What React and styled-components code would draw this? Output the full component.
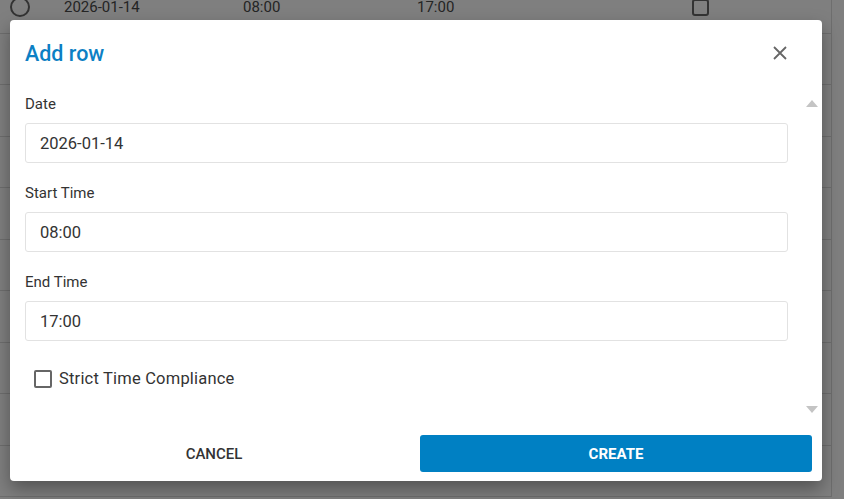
import React from "react";
import styled, { createGlobalStyle } from "styled-components";

const GlobalStyle = createGlobalStyle`
  html, body {
    margin: 0;
    padding: 0;
    background: #fff;
    font-family: Roboto, "Liberation Sans", sans-serif;
    overflow: hidden;
  }
  * { box-sizing: border-box; }
`;

const rows = [
  { date: "2026-01-14", start: "08:00", end: "17:00" },
  {}, {}, {}, {}, {}, {}, {}, {}, {},
];

const App = () => {
  return (
    <Page>
      <GlobalStyle />
      <Table>
        {rows.map((r, i) => (
          <Row key={i}>
            <Cell $w={64}>{r.date && <Radio />}</Cell>
            <Cell $w={179}>{r.date}</Cell>
            <Cell $w={174}>{r.start}</Cell>
            <Cell $w={274}>{r.end}</Cell>
            <Cell $w={141}>{r.date && <Box />}</Cell>
          </Row>
        ))}
      </Table>

      <Overlay>
        <Dialog>
          <Header>
            <Title>Add row</Title>
            <CloseBtn aria-label="close">
              <svg width="14" height="14" viewBox="0 0 14 14">
                <path d="M1 1 L13 13 M13 1 L1 13" stroke="#666" strokeWidth="1.8" />
              </svg>
            </CloseBtn>
          </Header>

          <Body>
            <Content>
              <Field>
                <Label>Date</Label>
                <Input>2026-01-14</Input>
              </Field>
              <Field>
                <Label>Start Time</Label>
                <Input>08:00</Input>
              </Field>
              <Field>
                <Label>End Time</Label>
                <Input>17:00</Input>
              </Field>
              <CheckRow>
                <CheckBox />
                <span>Strict Time Compliance</span>
              </CheckRow>
            </Content>
            <ScrollTrack>
              <Arrow />
              <Arrow $down />
            </ScrollTrack>
          </Body>

          <Footer>
            <TextButton>Cancel</TextButton>
            <PrimaryButton>Create</PrimaryButton>
          </Footer>
        </Dialog>
      </Overlay>
    </Page>
  );
};
export default App;

const Page = styled.div`
  position: relative;
  width: 844px;
  height: 499px;
  overflow: hidden;
`;

const Table = styled.div`
  margin-top: -18px;
  width: 832px;
  border-right: 1px solid #ddd;
`;

const Row = styled.div`
  display: flex;
  align-items: center;
  height: 51.5px;
  border-bottom: 1px solid #dcdcdc;
  font-size: 15px;
  color: #4a4a4a;
`;

const Cell = styled.div`
  width: ${(p) => p.$w}px;
  flex-shrink: 0;
  display: flex;
  align-items: center;
  padding-left: ${(p) => (p.$w === 64 ? 10 : 0)}px;
`;

const Radio = styled.span`
  width: 20px;
  height: 20px;
  border: 2px solid #666;
  border-radius: 50%;
`;

const Box = styled.span`
  margin-left: 1px;
  width: 17px;
  height: 17px;
  border: 2px solid #666;
  border-radius: 3px;
`;

const Overlay = styled.div`
  position: absolute;
  inset: 0;
  background: rgba(0, 0, 0, 0.5);
  padding: 20px 22px 18px 10px;
  display: flex;
`;

const Dialog = styled.div`
  flex: 1;
  background: #fff;
  border-radius: 4px;
  box-shadow: 0 8px 18px rgba(0, 0, 0, 0.35);
  display: flex;
  flex-direction: column;
`;

const Header = styled.div`
  height: 64px;
  display: flex;
  align-items: center;
  justify-content: space-between;
  padding: 2px 35px 0 15px;
`;

const Title = styled.h2`
  margin: 0;
  font-size: 21.5px;
  font-weight: 500;
  color: #0c80c4;
`;

const CloseBtn = styled.button`
  border: 0;
  background: none;
  padding: 0;
  width: 14px;
  height: 14px;
  display: flex;
  cursor: pointer;
`;

const Body = styled.div`
  height: 340px;
  display: flex;
`;

const Content = styled.div`
  flex: 1;
  padding: 12px 16px 0 15px;
  display: flex;
  flex-direction: column;
`;

const Field = styled.div`
  display: flex;
  flex-direction: column;
  margin-bottom: 22px;
`;

const Label = styled.label`
  font-size: 15px;
  line-height: 17px;
  color: #333;
  margin-bottom: 10px;
`;

const Input = styled.div`
  height: 40px;
  border: 1px solid #e2e2e2;
  border-radius: 3px;
  padding: 0 14px;
  display: flex;
  align-items: center;
  font-size: 16.5px;
  color: #333;
`;

const CheckRow = styled.div`
  display: flex;
  align-items: center;
  gap: 7px;
  padding-left: 9px;
  margin-top: 6px;
  font-size: 16.5px;
  letter-spacing: 0.2px;
  color: #333;
`;

const CheckBox = styled.span`
  width: 18px;
  height: 18px;
  border: 2px solid #666;
  border-radius: 2px;
`;

const ScrollTrack = styled.div`
  width: 16px;
  margin-right: 2px;
  display: flex;
  flex-direction: column;
  justify-content: space-between;
  align-items: center;
  padding: 16px 0 11px;
`;

const Arrow = styled.span`
  width: 0;
  height: 0;
  border-left: 6px solid transparent;
  border-right: 6px solid transparent;
  ${(p) =>
    p.$down
      ? "border-top: 7px solid #c4c4c4;"
      : "border-bottom: 7px solid #c4c4c4;"}
`;

const Footer = styled.div`
  flex: 1;
  display: grid;
  grid-template-columns: 1fr 392px;
  gap: 2px;
  padding: 11px 10px 9px 0;
`;

const TextButton = styled.button`
  border: 0;
  background: none;
  font-family: inherit;
  font-size: 15px;
  font-weight: 500;
  text-transform: uppercase;
  color: #333;
  cursor: pointer;
`;

const PrimaryButton = styled.button`
  border: 0;
  border-radius: 3px;
  background: #0080c3;
  color: #fff;
  font-family: inherit;
  font-size: 15px;
  font-weight: 700;
  text-transform: uppercase;
  cursor: pointer;
`;
